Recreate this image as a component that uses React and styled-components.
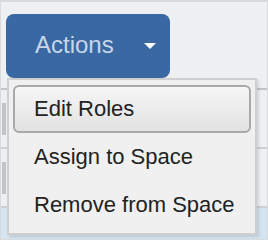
import React from "react"
import styled, { createGlobalStyle } from "styled-components"

const GlobalStyle = createGlobalStyle`
  html, body {
    margin: 0;
    padding: 0;
    background: #eef0f2;
  }
`

const items = [
  { label: "Edit Roles", active: true },
  { label: "Assign to Space" },
  { label: "Remove from Space" },
]

const rows = [{ mark: true }, { mark: true }, { selected: true, email: "cps@gmi.com" }]

export default function App() {
  return (
    <>
      <GlobalStyle />
      <Page>
        <Toolbar>
          <ActionsButton>
            <span>Actions</span>
            <Caret />
          </ActionsButton>
        </Toolbar>
        <Table>
          <HeadRow />
          {rows.map((r, i) => (
            <Row key={i} selected={r.selected}>
              <MarkCell>{r.mark && <Mark />}</MarkCell>
              <EmailCell>{r.email}</EmailCell>
            </Row>
          ))}
        </Table>
        <Menu>
          {items.map((it) => (
            <MenuItem key={it.label} active={it.active}>
              {it.label}
            </MenuItem>
          ))}
        </Menu>
      </Page>
    </>
  )
}

const Page = styled.div`
  position: relative;
  width: 268px;
  height: 240px;
  box-sizing: border-box;
  border: 1px solid #d9dadc;
  border-top-width: 2px;
  overflow: hidden;
  background: #eef0f2;
  font-family: "Liberation Sans", Arial, sans-serif;
`

const Toolbar = styled.div`
  display: flex;
  padding: 12px 0 0 5px;
`

const ActionsButton = styled.div`
  display: flex;
  align-items: center;
  box-sizing: border-box;
  width: 164px;
  height: 64px;
  padding: 0 0 2px 29px;
  gap: 30px;
  background: #3968a2;
  border-radius: 8px;
  color: #c8d7ea;
  font-size: 24px;
`

const Caret = styled.span`
  width: 0;
  height: 0;
  margin-top: 2px;
  border-left: 6px solid transparent;
  border-right: 6px solid transparent;
  border-top: 6px solid #ffffff;
`

const Table = styled.div`
  display: flex;
  flex-direction: column;
`

const HeadRow = styled.div`
  height: 10px;
  border-bottom: 2px solid #c4c5c7;
`

const Row = styled.div`
  display: flex;
  align-items: flex-end;
  height: 57px;
  border-bottom: 2px solid ${(p) => (p.selected ? "transparent" : "#cfd0d2")};
  background: ${(p) => (p.selected ? "#d5e4f1" : "transparent")};
`

const MarkCell = styled.div`
  width: 50px;
  height: 100%;
  display: flex;
  align-items: center;
  padding-left: 1px;
`

const Mark = styled.div`
  width: 4px;
  height: 32px;
  background: #c2c3c6;
`

const EmailCell = styled.div`
  font-size: 22px;
  line-height: 26px;
  color: #333;
  transform: translateY(20px);
`

const Menu = styled.div`
  position: absolute;
  left: 6px;
  top: 76px;
  width: 250px;
  box-sizing: border-box;
  padding: 5px 4px 4px;
  background: #f0f0f0;
  border: 2px solid #cfcfcf;
  box-shadow: 2px 2px 3px rgba(0, 0, 0, 0.12);
  display: flex;
  flex-direction: column;
`

const MenuItem = styled.div`
  height: 48px;
  box-sizing: border-box;
  display: flex;
  align-items: center;
  padding: 0 0 1px 19px;
  font-size: 22px;
  color: #222;
  border-radius: 6px;
  border: 2px solid ${(p) => (p.active ? "#a9a9a9" : "transparent")};
  background: ${(p) =>
    p.active ? "linear-gradient(#f6f6f6, #e2e2e2)" : "transparent"};
`
